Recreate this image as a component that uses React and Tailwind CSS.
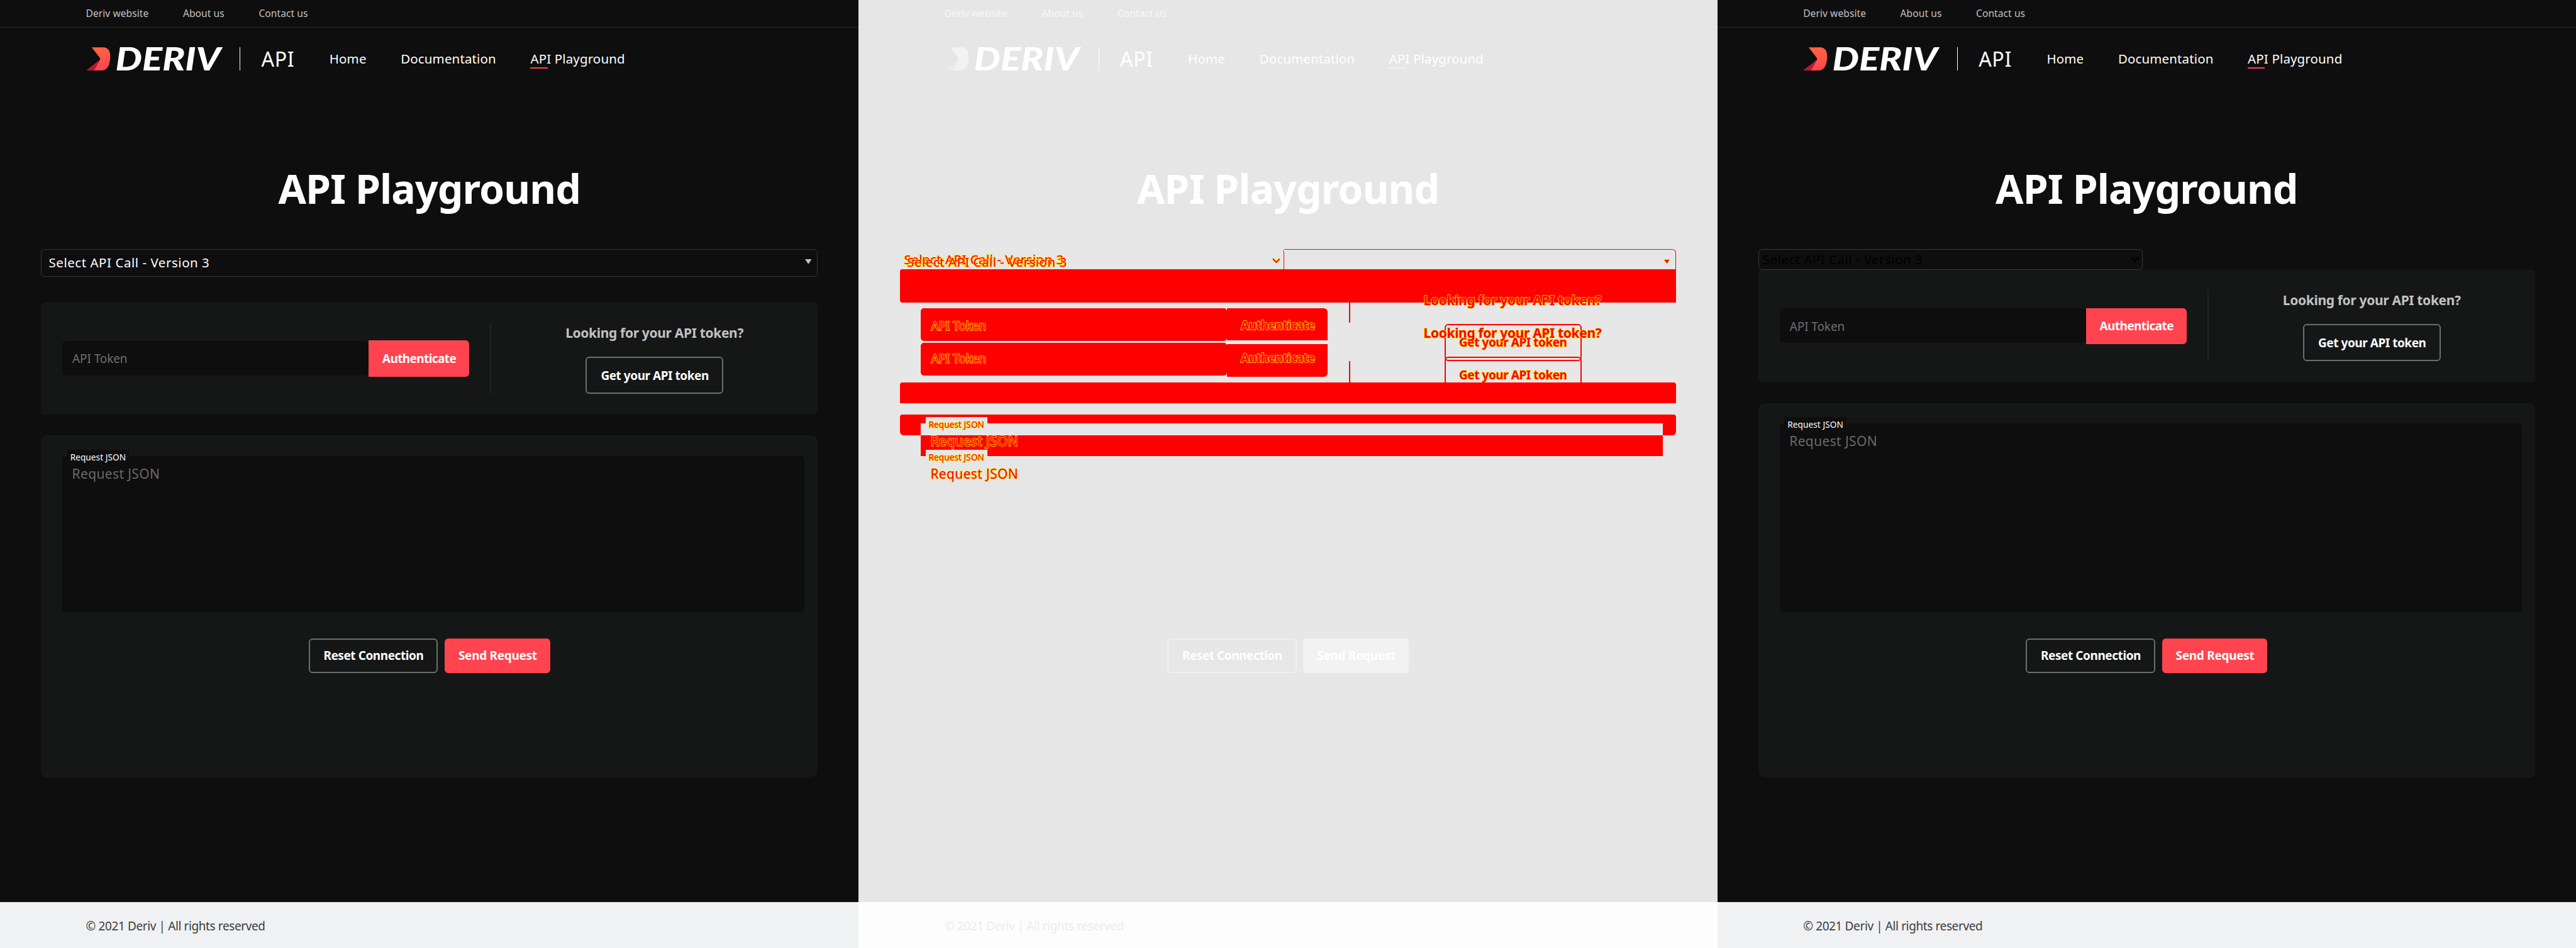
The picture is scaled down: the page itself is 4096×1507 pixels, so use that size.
import { useId } from 'react';
import clsx from 'clsx';

const dark = {
  page: 'bg-[#0e0e0e]',
  topText: 'text-[#c2c2c2]',
  rule: 'border-[#2a2a2a]',
  text: 'text-white',
  underline: 'bg-[#ff444f]',
  markTop: '#ff6444',
  markBottom: '#ff444f',
  markShade: '#b5192f',
  outline: 'border-[#6e6e6e]',
  primary: 'bg-[#ff444f]',
  footer: 'bg-[#f0f1f3]',
  footerText: 'text-[#3c3c3c]',
};

const faded = {
  page: 'bg-[#e6e6e6]',
  topText: 'text-[#f7f7f7]',
  rule: 'border-[#e9e9e9]',
  text: 'text-white',
  underline: 'bg-[#f2f2f2]',
  markTop: '#f3f3f3',
  markBottom: '#f1f1f1',
  markShade: '#ebebeb',
  outline: 'border-[#f0f0f0]',
  primary: 'bg-[#f2f2f2]',
  footer: 'bg-[#fdfdfd]',
  footerText: 'text-[#ececec]',
};

const changedText =
  'absolute whitespace-nowrap text-[#ff0000] [-webkit-text-stroke:1.5px_#ffe600] [paint-order:stroke_fill]';

function Logo({ theme }) {
  const id = useId();
  return (
    <svg className="block h-[38px] w-[224px] overflow-visible" viewBox="0 0 672 114">
      <defs>
        <linearGradient id={id} x1="0" y1="0" x2="0" y2="1">
          <stop offset="0" stopColor={theme.markTop} />
          <stop offset="1" stopColor={theme.markBottom} />
        </linearGradient>
      </defs>
      <path d="M0 114 L66 62 L58 114 Z" fill={theme.markShade} />
      <path
        d="M27 1 H82 C110 1 121 24 117 58 C114 95 101 114 74 114 H39 L67 63 Q70 57 66 51 Z"
        fill={`url(#${id})`}
      />
      <text
        x="143"
        y="114"
        textLength="515"
        lengthAdjust="spacingAndGlyphs"
        fill="#ffffff"
        className="font-['Lato',sans-serif] text-[157px] font-black italic"
      >
        DERIV
      </text>
    </svg>
  );
}

function Header({ theme }) {
  return (
    <header>
      <div
        className={clsx(
          'flex h-[45px] items-center gap-[56px] border-b pl-[140px] text-[16px] leading-[20px] tracking-[0.05px]',
          theme.rule,
          theme.topText,
        )}
      >
        <span>Deriv website</span>
        <span>About us</span>
        <span>Contact us</span>
      </div>
      <div className={clsx('flex h-[102px] items-center pl-[140px]', theme.text)}>
        <Logo theme={theme} />
        <div className="ml-[27px] h-[38px] w-[1.1px] bg-current" />
        <span className="mb-[1px] ml-[34px] w-[111px] text-[33px] leading-[40px] tracking-[0.6px]">API</span>
        <nav className="flex gap-[56px] text-[21px] leading-[28px] tracking-[0.15px]">
          <span>Home</span>
          <span>Documentation</span>
          <span className="relative">
            API Playground
            <span className={clsx('absolute top-[28px] left-0 h-[2.1px] w-[28px]', theme.underline)} />
          </span>
        </nav>
      </div>
      <h1
        className={clsx(
          'mt-[120px] mb-[59px] text-center text-[66px] leading-[80px] font-bold tracking-[-0.95px]',
          theme.text,
        )}
      >
        API Playground
      </h1>
    </header>
  );
}

function Actions({ theme }) {
  return (
    <div className="mt-[43px] flex justify-center gap-[11px] text-[19.5px] font-bold text-white">
      <div
        className={clsx(
          'flex h-[56px] w-[211px] items-center justify-center rounded-[6px] border-[2.1px] pl-px tracking-[-0.45px]',
          theme.outline,
        )}
      >
        Reset Connection
      </div>
      <div
        className={clsx(
          'flex h-[56px] w-[172px] items-center justify-center rounded-[6px] pl-px tracking-[-0.3px]',
          theme.primary,
        )}
      >
        Send Request
      </div>
    </div>
  );
}

function Panel({ theme, children }) {
  return (
    <section className={clsx('flex h-[1546px] w-[1400px] shrink-0 flex-col', theme.page)}>
      <Header theme={theme} />
      <main className="flex flex-col px-[67px]">{children}</main>
      <footer
        className={clsx(
          'mt-auto flex h-[76px] items-center pt-[3px] pl-[140px] text-[19.5px] tracking-[-0.4px]',
          theme.footer,
          theme.footerText,
        )}
      >
        © 2021 Deriv | All rights reserved
      </footer>
    </section>
  );
}

function TokenCard() {
  return (
    <div className="flex h-[183px] rounded-[6px] bg-[#151717]">
      <div className="flex w-[732px] pt-[62px] pl-[34.5px] text-[19.5px]">
        <div className="mt-px flex h-[56px] w-[499.5px] items-center rounded-[6px] bg-[#0e0e0e] pt-[2px] pl-[16.5px] tracking-[-0.1px] text-[#6e6e6e]">
          API Token
        </div>
        <div className="flex h-[59px] w-[164px] items-center justify-center rounded-r-[6px] bg-[#ff444f] pl-px font-bold tracking-[-0.6px] text-white">
          Authenticate
        </div>
      </div>
      <div className="mt-[33px] h-[116px] w-[2.1px] bg-[#202424]" />
      <div className="flex flex-1 flex-col items-center pt-[35px] font-bold">
        <p className="text-[21.5px] leading-[30px] tracking-[-0.32px] text-[#c2c2c2]">
          Looking for your API token?
        </p>
        <div className="mt-[23px] flex h-[61px] w-[224px] items-center justify-center rounded-[6px] border-[2.1px] border-[#6e6e6e] pt-px pl-px text-[19.5px] tracking-[-0.47px] text-white">
          Get your API token
        </div>
      </div>
    </div>
  );
}

function RequestCard({ tall }) {
  return (
    <div
      className={clsx(
        'mt-[34px] flex flex-col rounded-[10px] bg-[#151717] pt-[33px]',
        tall ? 'h-[610px]' : 'h-[557px]',
      )}
    >
      <div
        className={clsx(
          'relative ml-[34.5px] w-[1210px] rounded-[6px] bg-[#0e0e0e] pt-[15px] pl-[16px]',
          tall ? 'h-[308px]' : 'h-[255px]',
        )}
      >
        <span className="absolute top-[-10px] left-[8px] h-[24px] w-[101px] bg-[#0e0e0e] pl-[5px] text-[14px] leading-[24px] tracking-[0.05px] text-white">
          Request JSON
        </span>
        <span className="block text-[21.5px] leading-[30px] tracking-[0.4px] text-[#696969]">Request JSON</span>
      </div>
      <Actions theme={dark} />
    </div>
  );
}

function StyledSelect() {
  return (
    <div className="mb-[42px] flex h-[45px] items-center justify-between rounded-[6px] border-[1.1px] border-[#323738] pr-[9px] pl-[11.5px]">
      <span className="pb-[2px] text-[21px] tracking-[0.56px] text-white">Select API Call - Version 3</span>
      <svg className="mb-[4px] h-[8px] w-[11px]" viewBox="0 0 11 8">
        <path d="M0 0 H11 L5.5 8 Z" fill="#c2c2c2" />
      </svg>
    </div>
  );
}

function NativeSelect() {
  return (
    <div className="flex h-[34px] w-[627px] items-center justify-between rounded-[6px] border-[1.1px] border-[#3a3a3a] pr-[6px] pl-[6px]">
      <span className="text-[21px] tracking-[0.5px] text-black">Select API Call - Version 3</span>
      <svg className="h-[9px] w-[13px]" viewBox="0 0 13 9">
        <path d="M1.5 1.5 L6.5 7 L11.5 1.5" fill="none" stroke="#000000" strokeWidth="2.6" />
      </svg>
    </div>
  );
}

function SelectDiff() {
  return (
    <div className="relative h-[87px]">
      <div className="flex h-[33px]">
        <div className="w-[627px] rounded-t-[6px] border-x-[1.1px] border-t-[1.1px] border-[#e9e9e9] border-r-[#ff0000]" />
        <div className="flex-1 rounded-tr-[6px] border-t-[1.1px] border-r-[1.1px] border-[#ff0000]" />
      </div>
      <div className="h-[54px] rounded-l-[4px] bg-[#ff0000]" />
      <span className={clsx(changedText, 'top-[2px] left-[7px] text-[21px] leading-[30px] tracking-[0.5px]')}>
        Select API Call - Version 3
      </span>
      <span className={clsx(changedText, 'top-[6px] left-[12px] text-[21px] leading-[30px] tracking-[0.5px]')}>
        Select API Call - Version 3
      </span>
      <svg className="absolute top-[14px] left-[607px] h-[9px] w-[13px]" viewBox="0 0 13 9">
        <path d="M1 1.5 L6.5 7 L12 1.5" fill="none" stroke="#ffe600" strokeWidth="3.4" />
        <path d="M1 1.5 L6.5 7 L12 1.5" fill="none" stroke="#ff0000" strokeWidth="2" />
      </svg>
      <svg className="absolute top-[17px] right-[10px] h-[8px] w-[11px]" viewBox="0 0 11 8">
        <path d="M0.5 0.5 H10.5 L5.5 7.5 Z" fill="#ff0000" stroke="#ffe600" />
      </svg>
    </div>
  );
}

function TokenRowDiff() {
  return (
    <div className="relative flex h-[130px] rounded-t-[6px] bg-[#e7e7e7]">
      <div className="flex pt-[9px] pl-[34.5px]">
        <div className="flex w-[499.5px] flex-col gap-[3px] pt-px">
          <div className="h-[53px] rounded-[5px] bg-[#ff0000]" />
          <div className="h-[53px] rounded-[5px] bg-[#ff0000]" />
        </div>
        <div className="flex w-[164px] flex-col">
          <div className="h-[53px] rounded-tr-[6px] bg-[#ff0000]" />
          <div className="h-[6px] bg-[#f0f0f0]" />
          <div className="h-[53px] rounded-br-[6px] bg-[#ff0000]" />
        </div>
      </div>
      <div className="ml-[34px] flex w-[2.1px] flex-col justify-between">
        <div className="h-[33px] bg-[#ff0000]" />
        <div className="h-[34px] bg-[#ff0000]" />
      </div>
      <div className="flex flex-1 flex-col items-center pt-[35px]">
        <div className="h-[61px] w-[224px] rounded-[6px] border-[2.1px] border-[#ff0000]" />
        <div className="-mt-[8px] h-[42px] w-[224px] rounded-t-[6px] border-x-[2.1px] border-t-[2.1px] border-[#ff0000]" />
      </div>
      <span className={clsx(changedText, 'top-[24px] left-[51px] text-[19.5px] leading-[30px] tracking-[-0.1px]')}>
        API Token
      </span>
      <span className={clsx(changedText, 'top-[77px] left-[51px] text-[19.5px] leading-[30px] tracking-[-0.1px]')}>
        API Token
      </span>
      <span className={clsx(changedText, 'top-[23px] left-[556px] text-[19.5px] leading-[30px] font-bold tracking-[-0.6px]')}>
        Authenticate
      </span>
      <span className={clsx(changedText, 'top-[76px] left-[556px] text-[19.5px] leading-[30px] font-bold tracking-[-0.6px]')}>
        Authenticate
      </span>
      <span className={clsx(changedText, 'top-[51px] left-[912px] text-[19.5px] leading-[30px] font-bold tracking-[-0.47px]')}>
        Get your API token
      </span>
      <span className={clsx(changedText, 'top-[104px] left-[912px] text-[19.5px] leading-[30px] font-bold tracking-[-0.47px]')}>
        Get your API token
      </span>
      <span className={clsx(changedText, 'top-[-18px] left-[854px] text-[21.5px] leading-[30px] font-bold tracking-[-0.32px]')}>
        Looking for your API token?
      </span>
      <span className={clsx(changedText, 'top-[35px] left-[854px] text-[21.5px] leading-[30px] font-bold tracking-[-0.32px]')}>
        Looking for your API token?
      </span>
    </div>
  );
}

function RequestTopDiff() {
  return (
    <div className="relative">
      <div className="h-[34px] rounded-t-[4px] bg-[#ff0000]" />
      <div className="h-[19px]" />
      <div className="h-[14px] rounded-t-[4px] bg-[#ff0000]" />
      <div className="flex h-[20px] justify-between">
        <div className="w-[34px] rounded-bl-[6px] bg-[#ff0000]" />
        <div className="w-[22px] rounded-br-[6px] bg-[#ff0000]" />
      </div>
      <div className="h-[33px] bg-[#e7e7e7] pr-[22px] pl-[34px]">
        <div className="h-full bg-[#ff0000]" />
      </div>
      <div className="absolute top-[57px] left-[42px] h-[10px] w-[101px] bg-[#e6e6e6]" />
      <div className="absolute top-[110px] left-[42px] h-[10px] w-[101px] bg-[#e6e6e6]" />
      <span className={clsx(changedText, 'top-[57px] left-[47px] text-[14px] leading-[24px] tracking-[0.05px]')}>
        Request JSON
      </span>
      <span className={clsx(changedText, 'top-[110px] left-[47px] text-[14px] leading-[24px] tracking-[0.05px]')}>
        Request JSON
      </span>
      <span className={clsx(changedText, 'top-[82px] left-[50px] text-[21.5px] leading-[30px] tracking-[0.4px]')}>
        Request JSON
      </span>
      <span className={clsx(changedText, 'top-[135px] left-[50px] text-[21.5px] leading-[30px] tracking-[0.4px]')}>
        Request JSON
      </span>
    </div>
  );
}

export default function App() {
  return (
    <div className="h-[1507px] w-[4096px] overflow-hidden bg-[#0e0e0e]">
      <div className="flex w-[4200px] font-['Noto_Sans',sans-serif] [zoom:0.975238]">
        <Panel theme={dark}>
          <StyledSelect />
          <TokenCard />
          <RequestCard />
        </Panel>
        <Panel theme={faded}>
          <SelectDiff />
          <TokenRowDiff />
          <div className="relative z-10">
            <RequestTopDiff />
          </div>
          <div className="flex h-[524px] flex-col rounded-b-[10px] bg-[#e7e7e7]">
            <div className="ml-[34px] h-[255px] w-[1210px] rounded-b-[6px] bg-[#e6e6e6]" />
            <Actions theme={faded} />
          </div>
        </Panel>
        <Panel theme={dark}>
          <NativeSelect />
          <TokenCard />
          <RequestCard tall />
        </Panel>
      </div>
    </div>
  );
}
